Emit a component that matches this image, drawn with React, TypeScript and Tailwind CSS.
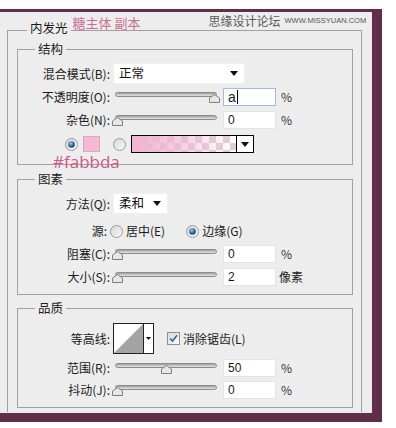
import React from "react";

const CJK = "font-['Noto_Sans_CJK_SC','Noto_Sans',sans-serif]";
const LAT = "font-['Liberation_Sans','Noto_Sans',sans-serif]";

function Arrow({ w = 8, h = 5 }: { w?: number; h?: number }) {
  return (
    <svg width={w} height={h} viewBox={`0 0 ${w} ${h}`}>
      <path d={`M0 0H${w}L${w / 2} ${h}Z`} fill="#111" />
    </svg>
  );
}

function Radio({ checked }: { checked?: boolean }) {
  return (
    <svg width="13" height="13" viewBox="0 0 13 13" className="shrink-0">
      <defs>
        <linearGradient id="rg" x1="0" y1="0" x2="1" y2="1">
          <stop offset="0" stopColor="#d4d4d4" />
          <stop offset="1" stopColor="#fbfbfb" />
        </linearGradient>
        <radialGradient id="rb" cx="0.4" cy="0.35" r="0.7">
          <stop offset="0" stopColor="#a9cdf3" />
          <stop offset="0.55" stopColor="#3468aa" />
          <stop offset="1" stopColor="#1c3d6c" />
        </radialGradient>
      </defs>
      <circle cx="6.5" cy="6.5" r="6" fill="url(#rg)" stroke="#9a9a9a" />
      {checked && <circle cx="6.5" cy="6.5" r="3.3" fill="url(#rb)" />}
    </svg>
  );
}

function Slider({ value }: { value: number }) {
  return (
    <div className="relative ml-[2px] w-[108px] h-[12px] shrink-0">
      <div className="absolute left-[3px] w-[102px] top-[1px] h-[5px] rounded-full border border-[#8c8c8c] bg-gradient-to-b from-[#9a9a9a] via-[#c6c6c6] to-[#e0e0e0]" />
      <svg
        className="absolute top-[3px]"
        style={{ left: Math.round(value * 0.97) }}
        width="11"
        height="9"
        viewBox="0 0 11 9"
      >
        <path d="M5.5 0.5L10.5 4V8.5H0.5V4Z" fill="#e6e6e6" stroke="#7f7f7f" />
      </svg>
    </div>
  );
}

function Field({ value, focused }: { value: string; focused?: boolean }) {
  return (
    <div
      className={`ml-[3px] w-[53px] h-[18px] shrink-0 bg-white border ${
        focused ? "border-[#9dbde6]" : "border-[#e4e4e4]"
      } flex items-center pl-[4px] ${focused ? "text-[14px]" : "text-[12px]"} text-[#1a1a1a] ${LAT}`}
    >
      {value}
      {focused && <span className="ml-[1px] w-[1px] h-[14px] bg-black" />}
    </div>
  );
}

function Label({ children, className = "" }: { children: React.ReactNode; className?: string }) {
  return (
    <div className={`w-[92px] shrink-0 whitespace-nowrap text-right text-[12px] leading-[18px] text-[#1c1c1c] ${className}`}>
      {children}
    </div>
  );
}

function Pct({ children = "%" }: { children?: React.ReactNode }) {
  return <span className="ml-[5px] whitespace-nowrap text-[12px] leading-[18px] text-[#333]">{children}</span>;
}

function Legend({ children }: { children: React.ReactNode }) {
  return (
    <div className="-mt-[10px] h-[18px] flex items-center">
      <span className="ml-[17px] px-[3px] whitespace-nowrap bg-[#ededed] text-[12.5px] leading-[18px] text-[#1c1c1c]">
        {children}
      </span>
    </div>
  );
}

function Dropdown({ text, width }: { text: string; width: string }) {
  return (
    <div
      className={`ml-[3px] ${width} h-[21px] shrink-0 bg-white border border-[#f0f0f0] flex items-center justify-between pl-[5px] pr-[6px] text-[12.5px] text-[#111]`}
    >
      <span className="whitespace-nowrap">{text}</span>
      <Arrow />
    </div>
  );
}

export default function App() {
  return (
    <div className={`w-[396px] h-[428px] bg-white pt-[9px] ${CJK}`}>
      <div className="w-[382px] border-t-[3px] border-r-[10px] border-b-[9px] border-[#5e2e4b]">
        <div className="h-[401px] bg-[#ededed] overflow-hidden pl-[7px] pt-[18px] border-r border-b border-[#f3e2ea]">
          {/* outer group: 内发光 */}
          <div className="w-[355px] h-[420px] border-l border-t border-r border-[#a0a0a0]">
            <div className="-mt-[12px] h-[18px] flex items-center whitespace-nowrap">
              <span className="ml-[19px] shrink-0 px-[3px] bg-[#ededed] text-[12.5px] leading-[18px] text-[#1c1c1c]">
                内发光
              </span>
              <span className="ml-[2px] w-[136px] shrink-0 -translate-y-[5px] text-[13px] leading-[18px] text-[#c96f96]">
                糖主体 副本
              </span>
              <span className="shrink-0 -translate-y-[7px] flex items-center">
                <span className="text-[12px] leading-[18px] text-[#5a5a5a]">思缘设计论坛</span>
                <span className={`ml-[4px] text-[7.5px] text-[#555] ${LAT}`}>
                  WWW.MISSYUAN.COM
                </span>
              </span>
            </div>

            {/* 结构 */}
            <div className="relative mt-[12px] ml-[9px] w-[336px] h-[116px] border border-[#a0a0a0]">
              <Legend>结构</Legend>
              <div className="mt-[5px] h-[21px] flex items-center">
                <Label>混合模式(B):</Label>
                <Dropdown text="正常" width="w-[132px]" />
              </div>
              <div className="mt-[4px] h-[18px] flex items-center">
                <Label>不透明度(O):</Label>
                <Slider value={100} />
                <Field value="a" focused />
                <Pct />
              </div>
              <div className="mt-[5px] h-[18px] flex items-center">
                <Label>杂色(N):</Label>
                <Slider value={0} />
                <Field value="0" />
                <Pct />
              </div>
              <div className="mt-[6px] h-[18px] flex items-center">
                <div className="ml-[47px]">
                  <Radio checked />
                </div>
                <div className="ml-[5px] w-[17px] h-[16px] bg-[#f4b9d8] border border-[#d9a9c1]" />
                <div className="ml-[13px]">
                  <Radio />
                </div>
                <div className="ml-[5px] w-[123px] h-[18px] border border-black flex">
                  <div className="relative flex-1 bg-[conic-gradient(#dcd2d7_25%,#ffffff_0_50%,#dcd2d7_0_75%,#ffffff_0)] bg-[length:14px_14px]">
                    <div className="absolute inset-0 bg-gradient-to-r from-[#f0b2d3] via-[#f0b2d3]/60 to-[#f0b2d3]/0" />
                  </div>
                  <div className="w-[17px] border-l border-black bg-white flex items-center justify-center">
                    <Arrow />
                  </div>
                </div>
              </div>
              <div className="absolute left-[35px] top-[102px] whitespace-nowrap text-[17px] leading-[20px] text-[#c8598b] font-['Open_Sans','Noto_Sans',sans-serif]">
                #fabbda
              </div>
            </div>

            {/* 图素 */}
            <div className="mt-[14px] ml-[9px] w-[336px] h-[116px] border border-[#a0a0a0]">
              <Legend>图素</Legend>
              <div className="mt-[5px] h-[21px] flex items-center">
                <Label>方法(Q):</Label>
                <Dropdown text="柔和" width="w-[55px]" />
              </div>
              <div className="mt-[9px] h-[16px] flex items-center">
                <Label className="pr-[3px]">源:</Label>
                <Radio />
                <span className="ml-[3px] whitespace-nowrap text-[12px] leading-[16px] text-[#1c1c1c]">居中(E)</span>
                <div className="ml-[21px]">
                  <Radio checked />
                </div>
                <span className="ml-[3px] whitespace-nowrap text-[12px] leading-[16px] text-[#1c1c1c]">边缘(G)</span>
              </div>
              <div className="mt-[6px] h-[18px] flex items-center">
                <Label>阻塞(C):</Label>
                <Slider value={0} />
                <Field value="0" />
                <Pct />
              </div>
              <div className="mt-[5px] h-[18px] flex items-center">
                <Label>大小(S):</Label>
                <Slider value={0} />
                <Field value="2" />
                <span className="ml-[3px] whitespace-nowrap text-[12px] leading-[18px] text-[#1c1c1c]">像素</span>
              </div>
            </div>

            {/* 品质 */}
            <div className="mt-[13px] ml-[9px] w-[336px] h-[100px] border border-[#a0a0a0]">
              <Legend>品质</Legend>
              <div className="mt-[6px] h-[31px] flex items-center">
                <Label>等高线:</Label>
                <div className="ml-[3px] w-[41px] h-[31px] shrink-0 border border-[#222] flex bg-white">
                  <svg width="29" height="29" viewBox="0 0 29 29">
                    <path d="M0 29L29 0V29Z" fill="#a3a3a3" />
                  </svg>
                  <div className="w-[10px] border-l border-[#222] flex items-center justify-center">
                    <Arrow w={5} h={3} />
                  </div>
                </div>
                <div className="ml-[13px] w-[13px] h-[13px] shrink-0 border border-[#8e8f8f] bg-gradient-to-br from-[#d8d8d8] to-[#fafafa] flex items-center justify-center">
                  <svg width="9" height="9" viewBox="0 0 9 9">
                    <path d="M1 4.5L3.5 7L8 1.2" fill="none" stroke="#3b5e9c" strokeWidth="1.6" />
                  </svg>
                </div>
                <span className="ml-[3px] whitespace-nowrap text-[12px] text-[#1c1c1c]">消除锯齿(L)</span>
              </div>
              <div className="mt-[5px] h-[18px] flex items-center">
                <Label>范围(R):</Label>
                <Slider value={50} />
                <Field value="50" />
                <Pct />
              </div>
              <div className="mt-[4px] h-[18px] flex items-center">
                <Label>抖动(J):</Label>
                <Slider value={0} />
                <Field value="0" />
                <Pct />
              </div>
            </div>
          </div>
        </div>
      </div>
    </div>
  );
}
